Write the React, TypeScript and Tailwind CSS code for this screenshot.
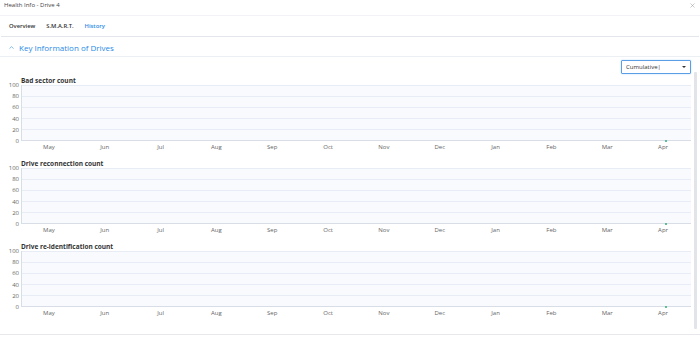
import { ChevronUp, X } from 'lucide-react';

const months = ['May', 'Jun', 'Jul', 'Aug', 'Sep', 'Oct', 'Nov', 'Dec', 'Jan', 'Feb', 'Mar', 'Apr'];
const ticks = ['100', '80', '60', '40', '20', '0'];

function Chart({ title }: { title: string }) {
  return (
    <div className="mb-[7px]">
      <div className="h-[8px] pl-[21px] text-[6.5px] leading-[8px] font-bold text-[#333]">{title}</div>
      <div className="flex h-[56px]">
        {/* y axis */}
        <div className="w-[21px] h-[62px] -mt-[3px] -mb-[3px] flex flex-col justify-between pr-[2px] text-right text-[6px] leading-[6px] text-[#666]">
          {ticks.map((t) => (
            <div key={t}>{t}</div>
          ))}
        </div>
        <div className="relative flex-1 h-[56px] bg-[#f8fafd] border-l border-b border-[#d9dee6] flex flex-col">
          {ticks.slice(0, 5).map((t) => (
            <div key={t} className="flex-1 border-t border-[#e8edf5]" />
          ))}
          <div className="absolute right-[24px] -bottom-[2px] w-[2px] h-[2px] rounded-full bg-[#2bb07a]" />
        </div>
      </div>
      <div className="ml-[21px] grid grid-cols-12 h-[12px] text-[6px] leading-[12px] text-[#666] text-center">
        {months.map((m) => (
          <div key={m}>{m}</div>
        ))}
      </div>
    </div>
  );
}

export default function App() {
  return (
    <div className="w-[700px] h-[337px] bg-white overflow-hidden flex flex-col" style={{ fontFamily: '"Open Sans", sans-serif' }}>
      {/* title bar */}
      <div className="h-[16px] flex items-start pt-[2px] justify-between px-[4px] border-b border-[#f1f3f6]">
        <span className="text-[6px] leading-[7px] text-[#444]">Health Info - Drive 4</span>
        <X className="w-[7px] h-[7px] text-[#888]" strokeWidth={1.5} />
      </div>

      {/* tabs */}
      <div className="h-[21px] flex items-center gap-[11px] px-[8px] mx-[1px] border-b border-[#e3e6eb]">
        <span className="text-[5.8px] font-semibold text-[#333]">Overview</span>
        <span className="text-[5.8px] font-semibold text-[#333]">S.M.A.R.T.</span>
        <span className="text-[5.8px] font-semibold text-[#2a8be6]">History</span>
      </div>

      {/* section header */}
      <div className="h-[20px] flex items-center pt-[2px] gap-[4px] pl-[8px] border-b border-[#eceff3]">
        <ChevronUp className="w-[7px] h-[7px] text-[#2a8be6]" strokeWidth={2} />
        <span className="text-[8px] text-[#2a8be6]">Key Information of Drives</span>
      </div>

      <div className="flex-1 flex">
        <div className="flex-1 flex flex-col">
          <div className="flex justify-end pr-[3px] mt-[3px]">
            <div className="w-[70px] h-[14px] border border-[#5b9ee6] rounded-[1px] flex items-center justify-between px-[4px] shadow-[0_0_2px_rgba(42,139,230,0.3)]">
              <span className="text-[6px] text-[#333]">Cumulative|</span>
              <span className="w-0 h-0 border-l-[2px] border-r-[2px] border-t-[2.5px] border-l-transparent border-r-transparent border-t-[#333]" />
            </div>
          </div>
          <div className="mt-[3px] pr-[3px]">
            <Chart title="Bad sector count" />
            <Chart title="Drive reconnection count" />
            <Chart title="Drive re-identification count" />
          </div>
        </div>
        <div className="w-[3px] mr-[3px] mt-[15px] mb-[5px] bg-[#e2e4e8] rounded-[1px]" />
      </div>
      <div className="h-[3px] border-t border-[#e6e8ec]" />
    </div>
  );
}
